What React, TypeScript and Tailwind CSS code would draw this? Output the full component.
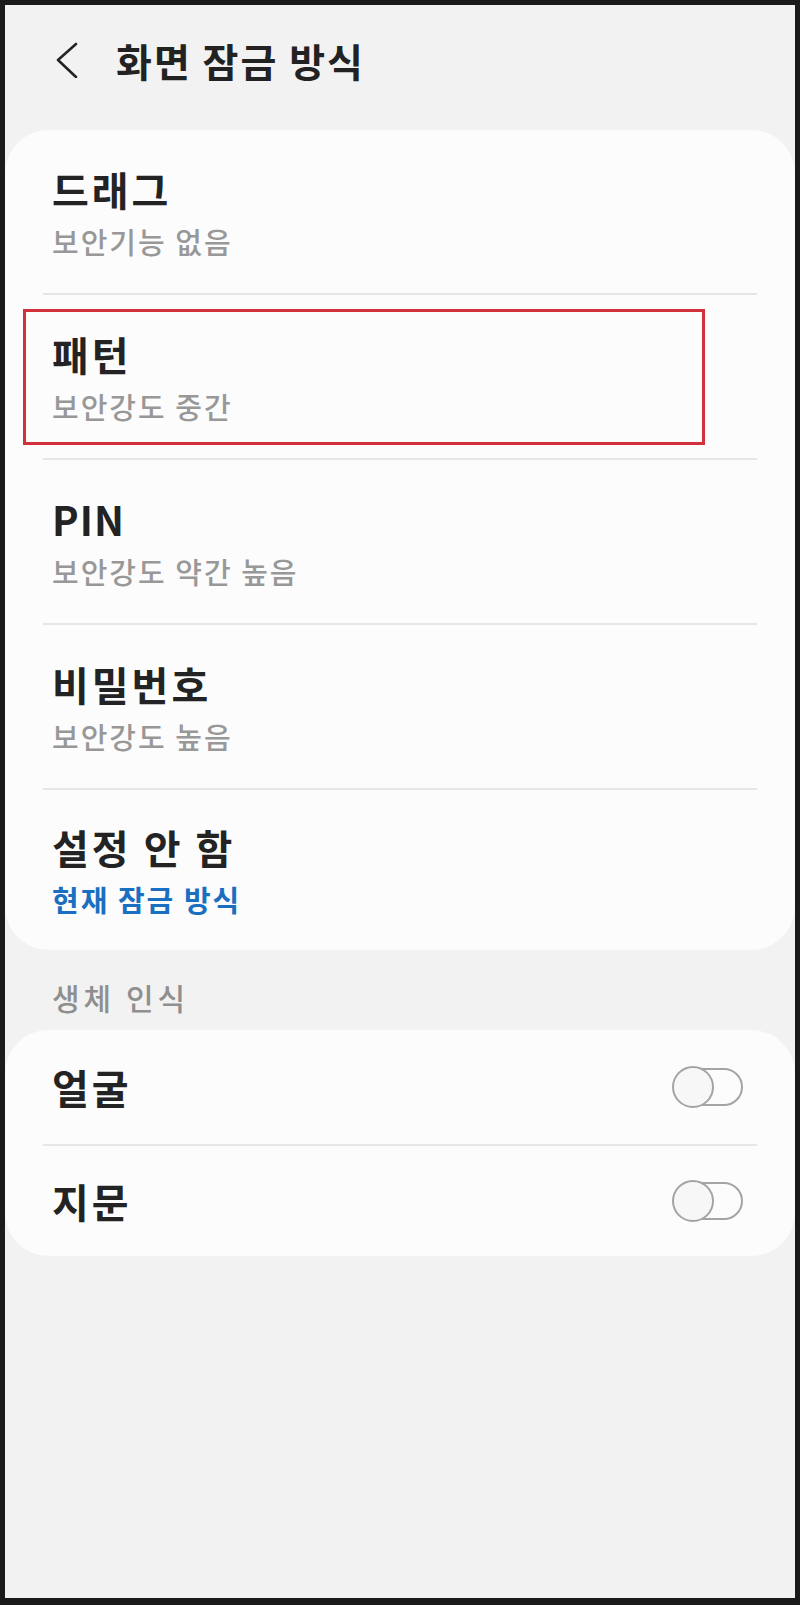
import React from "react";

const font = { fontFamily: '"Noto Sans CJK KR", "Noto Sans", sans-serif' };

function Toggle() {
  return (
    <div className="relative w-[71px] h-[42px] mr-[14px]">
      <div className="absolute right-0 top-[2px] w-[66px] h-[38px] rounded-full border-2 border-[#a4a4a4] bg-[#fcfcfc]" />
      <div className="absolute left-0 top-0 w-[42px] h-[42px] rounded-full border-2 border-[#a4a4a4] bg-[#f7f7f7]" />
    </div>
  );
}

type Item = { title: string; sub: string; blue?: boolean; highlight?: boolean; latin?: boolean; h: string };

const items: Item[] = [
  { title: "드래그", sub: "보안기능 없음", h: "h-[163px]" },
  { title: "패턴", sub: "보안강도 중간", highlight: true, h: "h-[163px]" },
  { title: "PIN", sub: "보안강도 약간 높음", latin: true, h: "h-[163px]" },
  { title: "비밀번호", sub: "보안강도 높음", h: "h-[163px]" },
  { title: "설정 안 함", sub: "현재 잠금 방식", blue: true, h: "h-[160px]" },
];

export default function App() {
  return (
    <div className="w-[800px] h-[1605px] bg-[#1b1b1b] pt-[5px] px-[5px] pb-[7px]" style={font}>
      <div className="w-full h-full bg-[#f2f2f2] flex flex-col">
        {/* header */}
        <div className="h-[125px] flex items-start pt-[30px]">
          <div className="ml-[50px] mt-[7px] w-[24px] h-[36px] flex items-center justify-center">
            <svg width="24" height="36" viewBox="0 0 24 36" fill="none">
              <polyline points="21,2 3,18 21,35" stroke="#242424" strokeWidth="2.6" strokeLinecap="round" strokeLinejoin="round" />
            </svg>
          </div>
          <div className="ml-[37px] text-[39px] leading-[50px] tracking-[2px] font-bold text-[#222222]">화면 잠금 방식</div>
        </div>

        {/* card 1 */}
        <div className="bg-[#fcfcfc] rounded-[44px] px-[38px]">
          {items.map((it, i) => (
            <div key={it.title}>
              {i > 0 && <div className="h-[2px] bg-[#e6e6e6]" />}
              <div className={`relative ${it.h} flex flex-col justify-center pl-[9px]`}>
                {it.highlight && (
                  <div className="absolute top-[14px] bottom-[13px] left-[-20px] right-[52px] border-[3px] border-[#d3303b]" />
                )}
                <div
                  className={`text-[40px] leading-[48px] font-bold text-[#232323] ${
                    it.latin ? "tracking-[1px]" : "tracking-[3px]"
                  }`}
                >
                  {it.title}
                </div>
                <div
                  className={`mt-[10px] text-[29px] leading-[36px] tracking-[2px] ${
                    it.blue ? "font-bold text-[#1b6fc1]" : "font-medium text-[#989898]"
                  }`}
                >
                  {it.sub}
                </div>
              </div>
            </div>
          ))}
        </div>

        {/* section label */}
        <div className="pl-[47px] pt-[29px] pb-[15px] text-[30px] leading-[36px] tracking-[4px] font-medium text-[#8f8f8f]">생체 인식</div>

        {/* card 2 */}
        <div className="bg-[#fcfcfc] rounded-[44px] px-[38px]">
          <div className="h-[114px] flex items-center justify-between pl-[9px]">
            <div className="text-[40px] leading-[48px] tracking-[3px] font-bold text-[#232323]">얼굴</div>
            <Toggle />
          </div>
          <div className="h-[2px] bg-[#e6e6e6]" />
          <div className="h-[110px] flex items-center justify-between pl-[9px]">
            <div className="text-[40px] leading-[48px] tracking-[3px] font-bold text-[#232323]">지문</div>
            <Toggle />
          </div>
        </div>
      </div>
    </div>
  );
}
